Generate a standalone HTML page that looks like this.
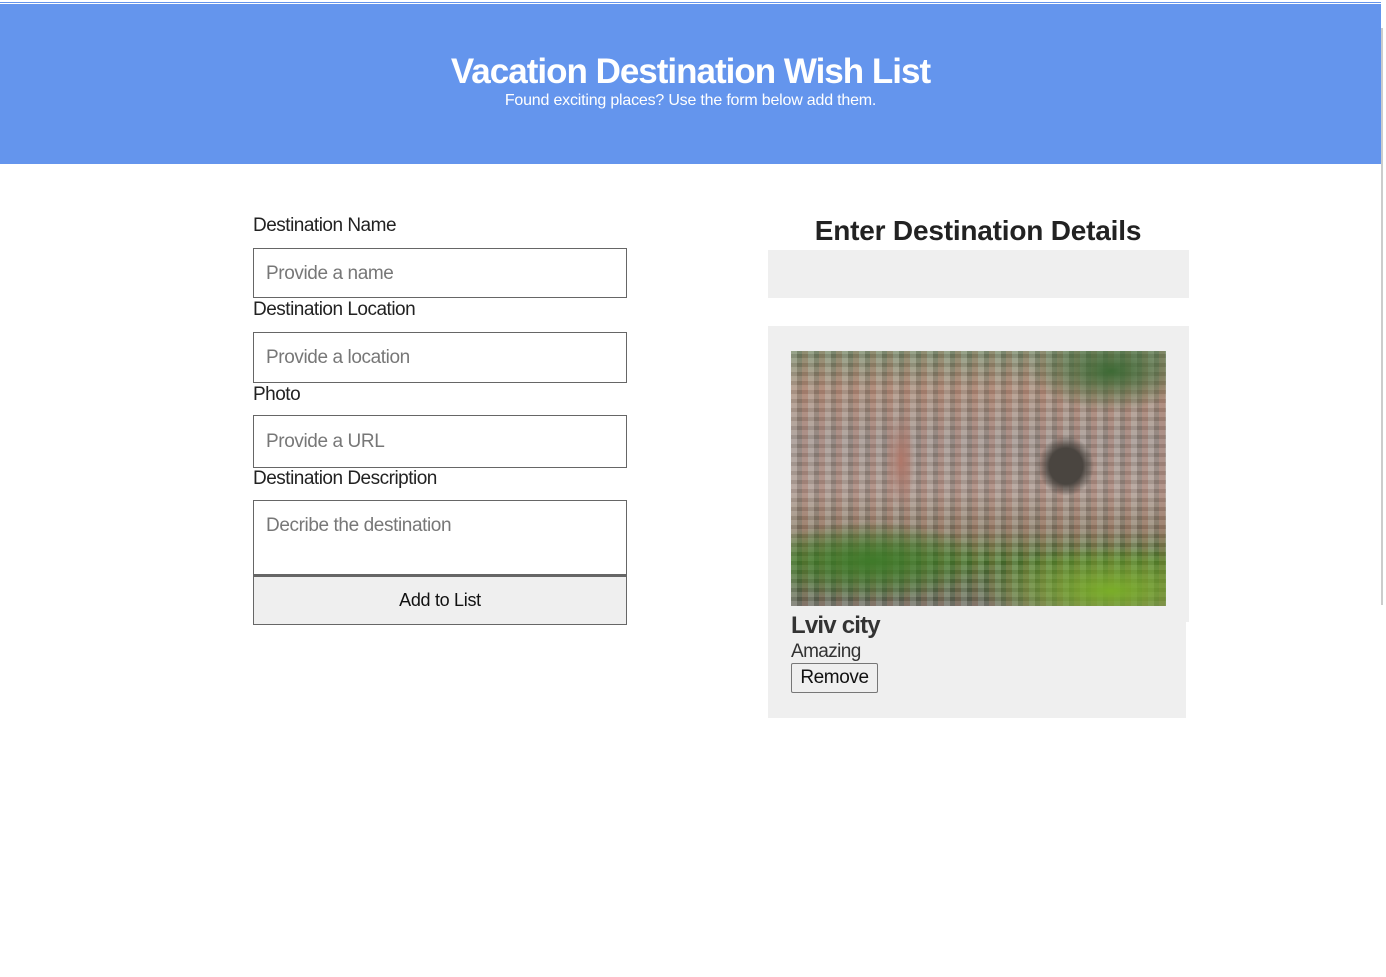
<!DOCTYPE html>
<html><head><style>
body{margin:0;width:1386px;height:977px;background:#fff;font-family:"Liberation Sans",sans-serif;position:relative;overflow:hidden}
.a{position:absolute}
.lbl{position:absolute;left:253px;font-size:19px;color:#222;letter-spacing:-0.5px}
.inp{position:absolute;left:253px;width:372px;border:1px solid #666;background:#fff;font-size:19px;color:#777}
.inp span{position:absolute;left:12px;letter-spacing:-0.4px}
</style></head><body>
<div class="a" style="left:0;top:2px;width:1381px;height:1px;background:#6495ed"></div>
<div class="a" style="left:0;top:4px;width:1381px;height:160px;background:#6495ed;color:#fff;text-align:center">
<div style="position:absolute;left:0;right:0;top:48px;font-size:35px;font-weight:bold;letter-spacing:-1px">Vacation Destination Wish List</div>
<div style="position:absolute;left:0;right:0;top:88px;font-size:16px;letter-spacing:-0.2px">Found exciting places? Use the form below add them.</div>
</div>
<div class="a" style="left:1381px;top:28px;width:2px;height:577px;background:#ccc"></div>

<div class="lbl" style="top:215px">Destination Name</div>
<div class="inp" style="top:248px;height:48px"><span style="top:14px">Provide a name</span></div>
<div class="lbl" style="top:299px">Destination Location</div>
<div class="inp" style="top:332px;height:49px"><span style="top:14px">Provide a location</span></div>
<div class="lbl" style="top:384px">Photo</div>
<div class="inp" style="top:415px;height:51px"><span style="top:15px">Provide a URL</span></div>
<div class="lbl" style="top:468px">Destination Description</div>
<div class="inp" style="top:500px;height:73px"><span style="top:14px">Decribe the destination</span></div>
<div class="inp" style="top:575px;background:#efefef;color:#111;border-top:2px solid #666;height:47px;text-align:center;line-height:46px;font-size:18px;letter-spacing:-0.3px">Add to List</div>

<div class="a" style="left:768px;top:215px;width:420px;text-align:center;font-size:28px;font-weight:bold;color:#222;letter-spacing:-0.2px">Enter Destination Details</div>
<div class="a" style="left:768px;top:250px;width:421px;height:48px;background:#efefef"></div>
<div class="a" style="left:768px;top:326px;width:421px;height:296px;background:#efefef"></div>
<div class="a" style="left:768px;top:622px;width:418px;height:96px;background:#efefef"></div>
<div class="a" style="left:791px;top:351px;width:375px;height:255px;background:
radial-gradient(ellipse 28px 30px at 275px 115px,#4a4540 60%,transparent 100%),
radial-gradient(ellipse 14px 50px at 110px 110px,#b0786a,transparent),
radial-gradient(ellipse 130px 45px at 320px 240px,#7aae28,transparent),
radial-gradient(ellipse 110px 40px at 80px 210px,#3f7a2a,transparent),
radial-gradient(ellipse 80px 40px at 320px 20px,#3d6a35,transparent),
repeating-linear-gradient(90deg,rgba(255,255,255,.12) 0 6px,rgba(0,0,0,.1) 6px 11px,rgba(200,80,60,.12) 11px 17px),
repeating-linear-gradient(0deg,rgba(255,255,255,.1) 0 5px,rgba(0,0,0,.08) 5px 9px),
linear-gradient(180deg,#7a8a6a 0%,#a88c7a 15%,#9d8f88 35%,#a8948a 55%,#8c7d68 70%,#4f7a30 82%,#6b6a60 100%)"></div>
<div class="a" style="left:791px;top:612px;font-size:24px;font-weight:bold;color:#333;letter-spacing:-0.8px">Lviv city</div>
<div class="a" style="left:791px;top:641px;font-size:19px;color:#333;letter-spacing:-0.6px">Amazing</div>
<div class="a" style="left:791px;top:663px;width:85px;height:28px;border:1px solid #777;border-radius:2px;background:#efefef;font-size:19px;text-align:center;line-height:27px;color:#111;letter-spacing:-0.4px">Remove</div>
</body></html>
